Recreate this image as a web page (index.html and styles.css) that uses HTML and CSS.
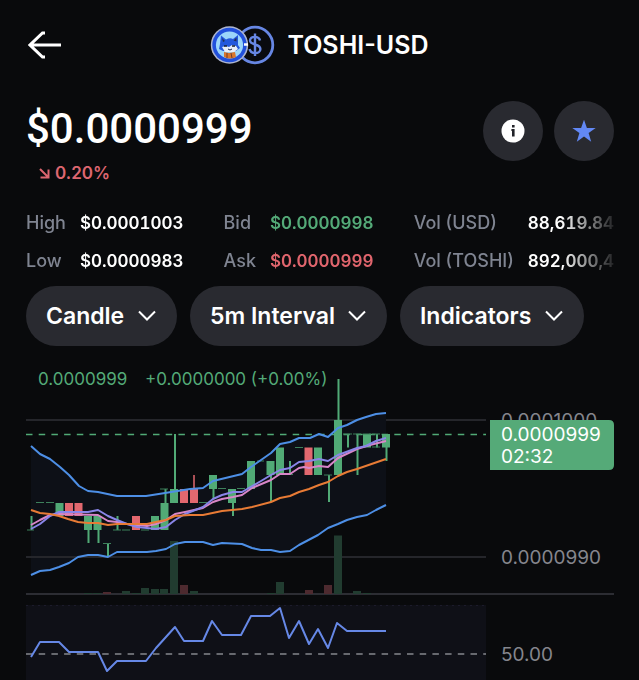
FILE: index.html
```html
<!DOCTYPE html>
<html lang="en">
<head>
<meta charset="utf-8">
<meta name="viewport" content="width=device-width, initial-scale=1">
<title>TOSHI-USD</title>
<link rel="stylesheet" href="styles.css">
</head>
<body>
<header class="topbar">
  <button class="back" aria-label="Back">
    <svg width="34" height="28" viewBox="0 0 34 28"><path d="M33 14H2M17 2H14.500L2 14l12.500 12H17" fill="none" stroke="#fff" stroke-width="3"/></svg>
  </button>
  <h1 class="pair">
    <svg width="65" height="40" viewBox="0 0 65 40" aria-hidden="true">
      <circle cx="45" cy="20" r="17.800" fill="#090a0e" stroke="#6787e4" stroke-width="2.800"/>
      <path d="M50 15.500C49 10.800 40 10.500 40 15.600C40 20.500 50.400 18.500 50.400 24C50.400 29.500 40.500 29.500 39.600 24M45 8.500v22.500" fill="none" stroke="#6787e4" stroke-width="2.400"/>
      <circle cx="19.500" cy="20" r="18.700" fill="#aeb6d0"/>
      <circle cx="19.500" cy="20" r="17.200" fill="#2150dc"/>
      <circle cx="19.500" cy="20" r="13.600" fill="#9bd6fa"/>
      <path d="M10 19L11 10.500L16 14.500Q20 12.500 23 14L28 10L28 20L30 23L26 26H13L9 24Z" fill="#2458dc"/>
      <path d="M12 13l3 3-2 1zM26.500 12.500l-3 3 3 1z" fill="#213056"/>
      <path d="M12 22l4-1 3 1 3-2 4 1 2 3-4 3H15z" fill="#e9eef8"/>
      <path d="M14 21h3M22 21h3" stroke="#172033" stroke-width="1.500"/>
      <path d="M18 24l2 1 2-1" fill="none" stroke="#17224a" stroke-width="1"/>
      <path d="M14 27l5 1 6-1 1 5q-6 3-12 0z" fill="#d9772d"/>
      <path d="M17 28v5M21 28l1 5" stroke="#743d28" stroke-width="1"/>
      <path d="M34 19.500h4" stroke="#fff" stroke-width="2.500"/>
    </svg>
    <span>TOSHI-USD</span>
  </h1>
</header>
<main>
  <section class="hero">
    <div>
      <p class="price">$0.0000999</p>
      <p class="change"><svg width="11" height="11" viewBox="0 0 11 11" aria-hidden="true"><path d="M1 1l8 8M9.500 1.500v8h-8" fill="none" stroke="currentColor" stroke-width="2"/></svg>0.20%</p>
    </div>
    <div class="actions">
      <button class="round" aria-label="Information"><svg width="24" height="24" viewBox="0 0 24 24"><circle cx="12" cy="12" r="11.500" fill="#fff"/><path d="M11 6h2.600v2.400H11zM10.400 10h3.200v7.500H11v-5.500h-.6z" fill="#222329"/></svg></button>
      <button class="round" aria-label="Favorite"><svg width="24" height="24" viewBox="0 0 24 24"><path d="M12 .8L14.900 9H23.700L16.600 14.100L19.200 22.800L12 17.600L4.800 22.800L7.400 14.100L.3 9H9.100Z" fill="#6288f5"/></svg></button>
    </div>
  </section>
  <section class="stats" aria-label="Market statistics">
    <dl><dt>High</dt><dd>$0.0001003</dd><dt>Low</dt><dd>$0.0000983</dd></dl>
    <dl><dt>Bid</dt><dd class="up">$0.0000998</dd><dt>Ask</dt><dd class="down">$0.0000999</dd></dl>
    <dl><dt>Vol (USD)</dt><dd>88,619.84</dd><dt>Vol (TOSHI)</dt><dd>892,000,4</dd></dl>
  </section>
  <section class="filters">
    <div class="pill"><select aria-label="Chart type"><option>Candle</option><option>Line</option></select><svg width="18" height="12" viewBox="0 0 18 12"><path d="M1 1.500l8 8 8-8"/></svg></div>
    <div class="pill"><select aria-label="Interval"><option>5m Interval</option></select><svg width="18" height="12" viewBox="0 0 18 12"><path d="M1 1.500l8 8 8-8"/></svg></div>
    <div class="pill"><select aria-label="Indicators"><option>Indicators</option></select><svg width="18" height="12" viewBox="0 0 18 12"><path d="M1 1.500l8 8 8-8"/></svg></div>
  </section>
  <svg class="chart" viewBox="26 360 588 320" role="img" aria-label="Price chart with Bollinger bands, volume and RSI">
    <path class="grid" d="M26 420H486M26 557H486"/>
    <path class="axis" d="M26 594H614"/>
    <rect x="26" y="605" width="460" height="75" fill="#0f1017"/>
    <path d="M26 605.500H486" stroke="#1c1b2b" stroke-dasharray="2 4"/>

    <path fill="#0d1017" d="M31 446L40 454L50 459L60 467L69 475L79 486L88 491L98 492L117 496H146L165 493L190 489L203 488L213 481L242 474L251 467L271 453L280 444L290 442L299 438H310L319 434L328 437L338 428L347 425L357 420L366 417L376 414L386 413V505L376 510L367 515L357 517L347 520L338 524L328 528L318 535L299 545L290 551L280 552L271 550L261 550L252 548L242 544L222 543L213 545L203 542H185L175 544L166 549L156 551L147 552H117L108 557L98 555H88L78 557L69 563L59 567L50 570L40 571L31 575Z"/>
    <path class="grid" d="M31 557H386"/>

    <g fill="#213c30">
      <path d="M84 593h8v1h-8zM93 593h8v1h-8zM122 591h8v3h-8zM132 593h8v1h-8zM141 588h8v6h-8zM151 589h8v5h-8zM160 589h8v5h-8zM170 541h8v53h-8zM190 591h8v3h-8zM267 593h8v1h-8zM276 582h8v12h-8zM334 535.500h8v58.500h-8zM353 591h8v3h-8zM363 593h8v1h-8z"/>
    </g>
    <path fill="#4d2a2f" d="M103 592h8v2h-8zM180 585h8v9h-8zM305 590h8v4h-8zM324 585h8v9h-8z"/>

    <path class="dash-green" d="M26 434.500H486"/>
    <g fill="#51aa76">
      <path d="M55.500 503h8v13h-8zM84 516h8v14h-8zM93.500 516h8v14h-8zM151 516h8v14h-8zM160.500 503h8v27h-8zM170 489h8v14h-8zM209 475h8v14h-8zM228 489h8v14h-8zM247 461h8v28h-8zM266.500 461h8v14h-8zM276 447.500h8v27.500h-8zM314 447.500h8v27.500h-8zM334 420h8v55h-8zM363 434h8v13.500h-8zM382 434h8v13.500h-8z"/>
    </g>
    <path fill="#e2686f" d="M65 503h8v13h-8zM74.500 503h8v13h-8zM132 516h8v14h-8zM180 489h8v14h-8zM190 489h8v14h-8zM304.500 447.500h8v27.500h-8z"/>
    <path class="wick" d="M31.500 516V530M88.500 530V543M98.500 530V543M108 543.500V557M117.500 516V530M165.500 489V503M175 434V489M213.500 489V499M233 503V516M271 475V502M290 461V475M329 475V502M338.500 379V420M348 434V447.500M357.500 434V475M377 434V447.500M386.500 447V461"/>
    <path d="M194 475V489" stroke="#e2686f" stroke-width="1.500"/>
    <path class="tick" d="M27 530H34M36 502.500H44M46 502.500H54M103 543.500H111M113 530H121M122 530H130M141 530H149M160 489H168M199 502.500H207M218 488.500H226M237 488.500H245M257 461H264M285 474.500H293M295 447.500H303M324 475H332M343 434H352M353 434H361M363 434H371M372 434H380M372 447H380"/>

    <path class="line pink" d="M31 525L40 520L50 515L59 514L98 515L108 521L117 522L127 524L137 525L147 526L156 524L166 520L175 514L185 512L203 508L213 502L222 499L233 497L242 495L252 488L271 480L280 474H290L299 468L304 467L309 468L319 466L328 467L338 458L357 449L370 445L386 441"/>
    <path class="line purple" d="M31 529L40 524L50 516L59 512H88L98 510L108 516L117 520L127 524L137 527L147 528L156 529L166 527L175 520L185 514L203 507L213 499L222 495L233 492H242L261 481L271 475L280 470L290 468L299 462L309 461L319 459L328 461L338 455L357 448L366 446L376 441L386 438"/>
    <path class="line orange" d="M31 510L40 513L50 514L59 516L68 519L78 522L88 523H98L108 525L117 524H147L156 522L166 520L175 516L190 515H203L222 511L242 509L252 507L271 502L280 498L290 496L299 492L309 489L319 485L328 482L338 476L347 472L357 469L386 459"/>
    <path class="line blue" d="M31 446L40 454L50 459L60 467L69 475L79 486L88 491L98 492L117 496H146L165 493L190 489L203 488L213 481L242 474L251 467L271 453L280 444L290 442L299 438H310L319 434L328 437L338 428L347 425L357 420L366 417L376 414L386 413"/>
    <path class="line blue" d="M31 575L40 571L50 570L59 567L69 563L78 557L88 555H98L108 557L117 552H147L156 551L166 549L175 544L185 542H203L213 545L222 543L242 544L252 548L261 550L271 550L280 552L290 551L299 545L318 535L328 528L338 524L347 520L357 517L367 515L376 510L386 505"/>

    <path class="dash-gray" d="M26 654H486"/>
    <path class="line rsi" d="M31 657L40 642H59L69 652H98L107 671L117 661H146L156 648L175 627L184 641H203L212 621L222 635H241L251 616H270L280 608L289 638L299 621L309 644L318 629L328 648L337 623L347 631H386"/>

    <text class="legend" x="38" y="385">0.0000999</text>
    <text class="legend" x="145" y="385">+0.0000000 (+0.00%)</text>
    <text class="scale" x="501" y="427">0.0001000</text>
    <text class="scale" x="501" y="564">0.0000990</text>
    <text class="scale" x="501" y="661">50.00</text>
    <path d="M490 420H609Q614 420 614 425V465Q614 470 609 470H490Z" fill="#55aa78"/>
    <text class="scale tag" x="501" y="441">0.0000999</text>
    <text class="scale tag" x="501" y="463">02:32</text>
  </svg>
</main>
</body>
</html>
```

FILE: styles.css
```css
* { box-sizing: border-box; margin: 0; padding: 0; }
body { background: #090a0c; color: #fff; font-family: Inter, "Liberation Sans", sans-serif; }
button { background: none; border: 0; color: inherit; font: inherit; cursor: pointer; }
svg { display: block; }

.topbar { display: grid; grid-template-columns: 1fr auto 1fr; align-items: center; height: 90px; padding: 0 28px; }
.back { justify-self: start; }
.pair { display: flex; align-items: center; gap: 12px; font-size: 25px; font-weight: 600; line-height: 32px; }

main { padding: 0 25px 0 26px; }
.hero { display: flex; justify-content: space-between; height: 114px; padding-top: 11px; }
.price { font-family: Roboto, "Liberation Sans", sans-serif; font-size: 42px; font-weight: 500; line-height: 56px; }
.change { display: flex; align-items: center; gap: 5px; padding: 4px 0 0 13px; color: #dd6670; font-size: 17px; font-weight: 600; line-height: 24px; }
.actions { display: flex; gap: 11px; }
.round { display: grid; place-items: center; width: 60px; height: 60px; border-radius: 50%; background: #292a30; }

.stats { display: flex; gap: 40px; overflow: hidden; white-space: nowrap; font-size: 17px; line-height: 38px; mask-image: linear-gradient(to right, #000 91%, transparent 101%); }
dl { display: grid; grid-template-columns: auto auto; column-gap: 14px; flex: none; }
dt { color: #7f8491; font-size: 18px; font-weight: 500; }
dd { font-weight: 600; font-feature-settings: "tnum"; }
.up { color: #54aa78; }
.down { color: #e0656d; }

.filters { display: flex; gap: 13px; margin-top: 6px; }
.pill { display: grid; align-items: center; border-radius: 30px; background: #292a30; }
.pill select, .pill svg { grid-area: 1 / 1; }
.pill select { height: 60px; padding: 0 52px 0 20px; border: 0; border-radius: 30px; background: none; color: #fff; font: 600 23px Inter, sans-serif; appearance: none; }
.pill svg { justify-self: end; margin-right: 21px; pointer-events: none; fill: none; stroke: #fff; stroke-width: 2; }

.chart { width: 100%; height: auto; margin-top: 14px; font-family: Inter, "Liberation Sans", sans-serif; }
.grid { stroke: #25262b; stroke-width: 2; }
.axis { stroke: #2c2d33; stroke-width: 2; }
.wick { stroke: #51aa76; stroke-width: 2; }
.tick { stroke: #3d805b; stroke-width: 1; }
.dash-green { stroke: #51aa76; stroke-width: 1.500; stroke-dasharray: 6.500 6.200; }
.dash-gray { stroke: #85868d; stroke-width: 1.500; stroke-dasharray: 6.500 6.200; }
.line { fill: none; stroke-width: 2; stroke-linejoin: round; }
.blue { stroke: #4d8fe6; }
.purple { stroke: #8985e8; }
.pink { stroke: #d886c8; }
.orange { stroke: #e87b35; }
.rsi { stroke: #6688e6; }
.legend { fill: #54aa78; font-size: 17px; }
.scale { fill: #85868d; font-size: 19px; }
.tag { fill: #fff; }
```
